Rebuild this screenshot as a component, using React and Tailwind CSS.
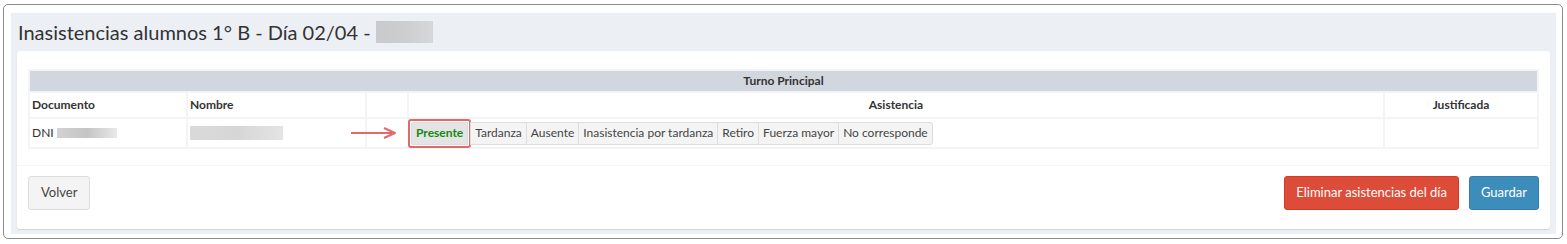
import { useState } from "react";

// --- Opciones de asistencia ---
const OPCIONES = [
  "Presente",
  "Tardanza",
  "Ausente",
  "Inasistencia por tardanza",
  "Retiro",
  "Fuerza mayor",
  "No corresponde",
];

const Arrow = () => (
  <svg width="46" height="12" viewBox="0 0 46 12" className="block">
    <line x1="0" y1="6" x2="41" y2="6" stroke="#e26a6a" strokeWidth="1.8" />
    <path d="M33 1 L44 6 L33 11" fill="none" stroke="#e26a6a" strokeWidth="2" strokeLinejoin="round" />
  </svg>
);

const AsistenciaGroup = ({ value, onChange }) => (
  <div className="flex items-center">
    {OPCIONES.map((op, i) => {
      const active = value === op;
      return (
        <div
          key={op}
          className={
            active
              ? "rounded-[3px] border-2 border-[#e06a6a] p-px -ml-px -my-[2px]"
              : ""
          }
        >
          <button
            onClick={() => onChange(op)}
            className={
              "h-[23px] px-[4px] text-[12px] leading-none border border-[#ddd] " +
              (active
                ? "bg-[#e4e4e4] text-[#138a13] font-bold rounded-l-[2px]"
                : "bg-[#f4f4f4] text-[#444] -ml-px") +
              (i === OPCIONES.length - 1 ? " rounded-r-[3px]" : "")
            }
          >
            {op}
          </button>
        </div>
      );
    })}
  </div>
);

export default function App() {
  const [asistencia, setAsistencia] = useState("Presente");

  return (
    <div
      className="w-[1567px] h-[244px] bg-white pl-[3px] pr-[4px] pt-[4px] pb-[5px] text-[#333]"
      style={{ fontFamily: "Lato, 'Open Sans', sans-serif" }}
    >
      <div className="h-full border border-[#8c8c8c] rounded-[5px] pl-[7px] pr-[6px] pt-[8px] pb-[4px]">
        <div className="h-full bg-[#ecf0f5] px-[6px] pb-[5px] flex flex-col">
          {/* Titulo */}
          <h1 className="h-[38px] flex items-center text-[20px] pl-[1px]">
            Inasistencias alumnos 1° B - Día 02/04 -
            <span className="ml-[5px] inline-block w-[57px] h-[22px] bg-gradient-to-r from-[#c9cacd] via-[#cdced1] to-[#d6d7da]" />
          </h1>

          {/* Box */}
          <div className="flex-1 bg-white rounded-[3px] shadow-[0_1px_1px_rgba(0,0,0,0.12)] flex flex-col">
            <div className="px-[11px] pt-[18px] pb-[16px] border-b border-[#f4f4f4]">
              <table className="w-full border-collapse text-[12px]">
                <thead>
                  <tr>
                    <th colSpan={5} className="h-[22px] bg-[#d2d6de] border-2 border-[#f4f4f4] font-bold text-center">
                      Turno Principal
                    </th>
                  </tr>
                  <tr className="h-[26px]">
                    <th className="w-[158px] border-2 border-[#f4f4f4] text-left pl-[2px] font-bold">Documento</th>
                    <th className="w-[179px] border-2 border-[#f4f4f4] text-left pl-[2px] font-bold">Nombre</th>
                    <th className="w-[42px] border-2 border-[#f4f4f4]" />
                    <th className="border-2 border-[#f4f4f4] text-center font-bold">Asistencia</th>
                    <th className="w-[154px] border-2 border-[#f4f4f4] text-center font-bold">Justificada</th>
                  </tr>
                </thead>
                <tbody>
                  <tr className="h-[30px]">
                    <td className="border-2 border-[#f4f4f4] pl-[2px]">
                      <div className="flex items-center">
                        DNI
                        <span className="ml-[3px] inline-block w-[60px] h-[10px] bg-gradient-to-r from-[#d3d3d4] via-[#c4c4c5] to-[#e9e9ea]" />
                      </div>
                    </td>
                    <td className="border-2 border-[#f4f4f4] pl-[2px]">
                      <span className="block w-[93px] h-[14px] bg-gradient-to-r from-[#dadada] via-[#d6d6d6] to-[#e4e4e4]" />
                    </td>
                    <td colSpan={2} className="border-2 border-[#f4f4f4] p-0">
                      <div className="flex items-center -ml-[16px]">
                        <Arrow />
                        <div className="ml-[12px]">
                          <AsistenciaGroup value={asistencia} onChange={setAsistencia} />
                        </div>
                      </div>
                    </td>
                    <td className="border-2 border-[#f4f4f4]" />
                  </tr>
                </tbody>
              </table>
            </div>

            {/* Footer */}
            <div className="flex items-center justify-between px-[11px] pt-[10px]">
              <button className="h-[34px] px-[12px] text-[13px] text-[#444] bg-[#f4f4f4] border border-[#ddd] rounded-[3px]">
                Volver
              </button>
              <div className="flex gap-[10px]">
                <button className="h-[34px] px-[11px] text-[13px] text-white bg-[#dd4b39] border border-[#d73925] rounded-[3px]">
                  Eliminar asistencias del día
                </button>
                <button className="h-[34px] px-[11px] text-[13px] text-white bg-[#3c8dbc] border border-[#367fa9] rounded-[3px]">
                  Guardar
                </button>
              </div>
            </div>
          </div>
        </div>
      </div>
    </div>
  );
}
